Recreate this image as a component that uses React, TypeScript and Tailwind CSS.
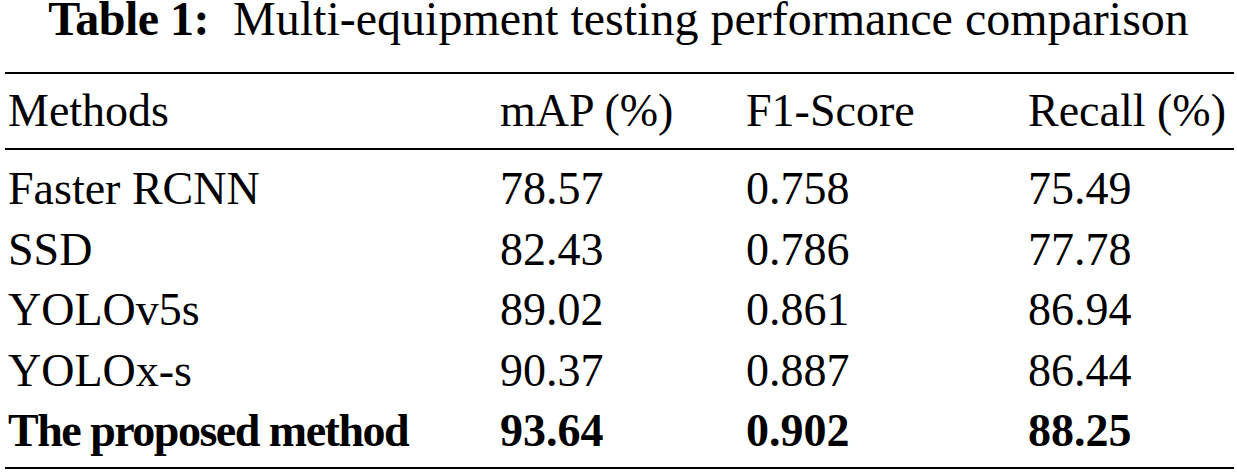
import React from "react";

const rows: { name: string; map: string; f1: string; recall: string; bold?: boolean }[] = [
  { name: "Faster RCNN", map: "78.57", f1: "0.758", recall: "75.49" },
  { name: "SSD", map: "82.43", f1: "0.786", recall: "77.78" },
  { name: "YOLOv5s", map: "89.02", f1: "0.861", recall: "86.94" },
  { name: "YOLOx-s", map: "90.37", f1: "0.887", recall: "86.44" },
  { name: "The proposed method", map: "93.64", f1: "0.902", recall: "88.25", bold: true },
];

export default function App() {
  return (
    <div
      className="w-[1237px] h-[475px] bg-white text-black overflow-hidden"
      style={{ fontFamily: '"Liberation Serif", "Times New Roman", serif' }}
    >
      <div className="h-[40px] text-center text-[48px] leading-[38px] whitespace-pre">
        <span className="font-bold tracking-[-0.5px]">Table 1:</span>
        <span>{"  "}Multi-equipment testing performance comparison</span>
      </div>
      <div className="ml-[5px] mt-[32px] w-[1229px]">
        <div className="h-[2px] bg-black" />
        <div className="grid grid-cols-[492px_246px_282px_1fr] pt-[14px] pb-[14px] text-[46px] leading-[46px]">
          <div className="pl-[3px]">Methods</div>
          <div className="pl-[3px]">mAP (%)</div>
          <div className="pl-[3px]">F1-Score</div>
          <div className="pl-[3px]">Recall (%)</div>
        </div>
        <div className="h-[2px] bg-black" />
        <div className="pt-[9px] pb-[5px]">
          {rows.map((r) => (
            <div
              key={r.name}
              className={`grid grid-cols-[492px_246px_282px_1fr] text-[46px] leading-[60.5px] ${r.bold ? "font-bold" : ""}`}
            >
              <div className={`pl-[3px] whitespace-nowrap ${r.bold ? "tracking-[-1.5px]" : ""}`}>{r.name}</div>
              <div className="pl-[3px]">{r.map}</div>
              <div className="pl-[3px]">{r.f1}</div>
              <div className="pl-[3px]">{r.recall}</div>
            </div>
          ))}
        </div>
        <div className="h-[2px] bg-black" />
      </div>
    </div>
  );
}
